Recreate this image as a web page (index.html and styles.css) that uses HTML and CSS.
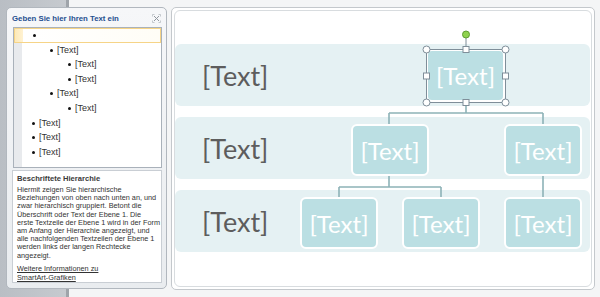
FILE: index.html
```html
<!DOCTYPE html>
<html lang="de">
<head>
    <meta charset="UTF-8">
    <title>SmartArt Textbereich</title>
    <link rel="stylesheet" href="styles.css">
</head>
<body>

<div class="pane">
    <div class="pane-head">
        <span class="pane-title">Geben Sie hier Ihren Text ein</span>
        <svg class="pane-close" width="9" height="9" viewBox="0 0 9 9">
            <path d="M2 2 L7 7 M7 2 L2 7" stroke="#9298a0" stroke-width="1"/>
            <path d="M0.5 2.5 V0.5 H2.5 M6.5 0.5 H8.5 V2.5 M8.5 6.5 V8.5 H6.5 M2.5 8.5 H0.5 V6.5" stroke="#b8bcc1" stroke-width="0.8" fill="none"/>
        </svg>
    </div>
    <ul class="textbox">
        <li class="lvl0 active"></li>
        <li class="lvl1">[Text]</li>
        <li class="lvl2">[Text]</li>
        <li class="lvl2">[Text]</li>
        <li class="lvl1">[Text]</li>
        <li class="lvl2">[Text]</li>
        <li class="lvl0">[Text]</li>
        <li class="lvl0">[Text]</li>
        <li class="lvl0">[Text]</li>
    </ul>
    <div class="desc">
        <div class="desc-title">Beschriftete Hierarchie</div>
        <p>Hiermit zeigen Sie hierarchische<br>
        Beziehungen von oben nach unten an, und<br>
        zwar hierarchisch gruppiert. Betont die<br>
        Überschrift oder Text der Ebene 1. Die<br>
        erste Textzeile der Ebene 1 wird in der Form<br>
        am Anfang der Hierarchie angezeigt, und<br>
        alle nachfolgenden Textzeilen der Ebene 1<br>
        werden links der langen Rechtecke<br>
        angezeigt.</p>
        <a href="#">Weitere Informationen zu<br>SmartArt-Grafiken</a>
    </div>
</div>

<div class="stage">
    <div class="sheet">
        <div class="band"><span class="band-label">[Text]</span></div>
        <div class="band"><span class="band-label">[Text]</span></div>
        <div class="band"><span class="band-label">[Text]</span></div>

        <!-- connectors -->
        <svg class="lines" width="416" height="275">
            <path d="M291 91 V102 M214 102 H368 M214 102 V113 M368 102 V113 M214 165 V176 M164 176 H266 M164 176 V186 M266 176 V186 M368 165 V186"
                  stroke="#8db2b7" stroke-width="1.6" fill="none"/>
        </svg>

        <div class="node" style="left:251px; top:38px; width:79px; height:53px;">[Text]</div>
        <div class="node" style="left:176px; top:113px; width:78px; height:52px;">[Text]</div>
        <div class="node" style="left:329px; top:113px; width:78px; height:52px;">[Text]</div>
        <div class="node" style="left:125px; top:186px; width:78px; height:52px;">[Text]</div>
        <div class="node" style="left:227px; top:186px; width:78px; height:52px;">[Text]</div>
        <div class="node" style="left:329px; top:186px; width:78px; height:52px;">[Text]</div>

        <!-- selection handles of the active shape -->
        <svg class="select" width="416" height="275">
            <rect x="251.5" y="38.5" width="79" height="53" fill="none" stroke="#7f8e99" stroke-width="1"/>
            <line x1="291" y1="27" x2="291" y2="38" stroke="#7f8e99" stroke-width="1"/>
            <circle cx="291" cy="23.5" r="3.5" fill="#8fd24e" stroke="#5f9d32" stroke-width="1"/>
            <g fill="#fff" stroke="#7f8e99" stroke-width="1">
                <circle cx="251.5" cy="38.5" r="3.5"/>
                <circle cx="330.5" cy="38.5" r="3.5"/>
                <circle cx="251.5" cy="91.5" r="3.5"/>
                <circle cx="330.5" cy="91.5" r="3.5"/>
                <rect x="288" y="35.5" width="6" height="6"/>
                <rect x="288" y="88.5" width="6" height="6"/>
                <rect x="248.5" y="62" width="6" height="6"/>
                <rect x="327.5" y="62" width="6" height="6"/>
            </g>
        </svg>
    </div>
</div>

</body>
</html>
```

FILE: styles.css
```css
body {
    margin: 0;
    width: 600px;
    height: 297px;
    overflow: hidden;
    display: flex;
    align-items: flex-start;
    font-family: "Liberation Sans", Arial, sans-serif;
    background: linear-gradient(to right, #b9bec4 0, #c6cacf 66px, #9fa4aa 66px, #9fa4aa 69px, #f4f5f6 69px);
}
.pane {
    box-sizing: border-box;
    margin: 7px 0 0 6px;
    width: 161px;
    height: 282px;
    border: 1px solid #b1b7be;
    border-radius: 5px;
    background: linear-gradient(#f6f7f9, #e9ecef);
    display: flex;
    flex-direction: column;
}
.pane-head {
    height: 19px;
    padding: 0 5px 0 5px;
    display: flex;
    align-items: center;
    justify-content: space-between;
}
.pane-title {
    font-size: 7.8px;
    font-weight: bold;
    color: #1f4f8f;
    padding-top: 2px;
}
.pane-close {
    margin-top: 2px;
}
.textbox {
    box-sizing: border-box;
    list-style: none;
    margin: 0 4px 0 6px;
    padding: 0;
    height: 141px;
    border: 1px solid #a9b1ba;
    background: linear-gradient(to right, #e8eaed 0, #e8eaed 8px, #fff 8px);
    font-size: 9px;
    color: #333;
}
.textbox li {
    position: relative;
    box-sizing: border-box;
    height: 14.6px;
    line-height: 14.6px;
}
.textbox li::before {
    content: "";
    position: absolute;
    top: 6px;
    width: 3px;
    height: 3px;
    border-radius: 50%;
    background: #111;
}
.lvl0 { padding-left: 25px; }
.lvl0::before { left: 18px; }
.lvl1 { padding-left: 43px; }
.lvl1::before { left: 36px; }
.lvl2 { padding-left: 61px; }
.lvl2::before { left: 54px; }
.textbox li.active {
    border: 1px solid #f6d487;
    background: linear-gradient(to right, #fde9b8 0, #fff2d2 8px, #fff 8px, #fffdf6);
    line-height: 12.6px;
}
.textbox li.active::before {
    left: 18px;
    top: 5px;
}
.desc {
    box-sizing: border-box;
    margin: 2px 4px 0 5px;
    height: 113px;
    padding: 3px 3px 0 4px;
    background: #fff;
    border: 1px solid #c9ced4;
    color: #333;
}
.desc-title {
    font-size: 7.6px;
    font-weight: bold;
    color: #3a3a3a;
    margin-bottom: 3px;
}
.desc p {
    margin: 0 0 4px 0;
    font-size: 7.3px;
    line-height: 8.2px;
    white-space: nowrap;
}
.desc a {
    display: block;
    font-size: 7.3px;
    line-height: 9px;
    color: #333;
}
.stage {
    box-sizing: border-box;
    margin: 7px 0 0 4px;
    width: 424px;
    height: 283px;
    padding: 2px;
    border: 1px solid #c4c8cc;
    border-radius: 5px;
    background: #fff;
}
.sheet {
    position: relative;
    box-sizing: border-box;
    height: 100%;
    padding: 33px 1px 0 0;
    border: 1px solid #d8dcdf;
    border-radius: 6px;
    display: flex;
    flex-direction: column;
    gap: 11px;
}
.band {
    height: 62px;
    border-radius: 6px;
    background: #e5f1f3;
    display: flex;
    align-items: center;
    padding-left: 27px;
}
.band-label {
    font-family: Lato, "Open Sans", sans-serif;
    font-size: 27px;
    color: #5d5d5d;
}
.lines, .select {
    position: absolute;
    left: 0;
    top: 0;
}
.node {
    position: absolute;
    box-sizing: border-box;
    border: 2px solid #fff;
    border-radius: 6px;
    background: #bbdfe3;
    color: #fff;
    font-family: Lato, "Open Sans", sans-serif;
    font-size: 24px;
    display: flex;
    align-items: center;
    justify-content: center;
}
```
